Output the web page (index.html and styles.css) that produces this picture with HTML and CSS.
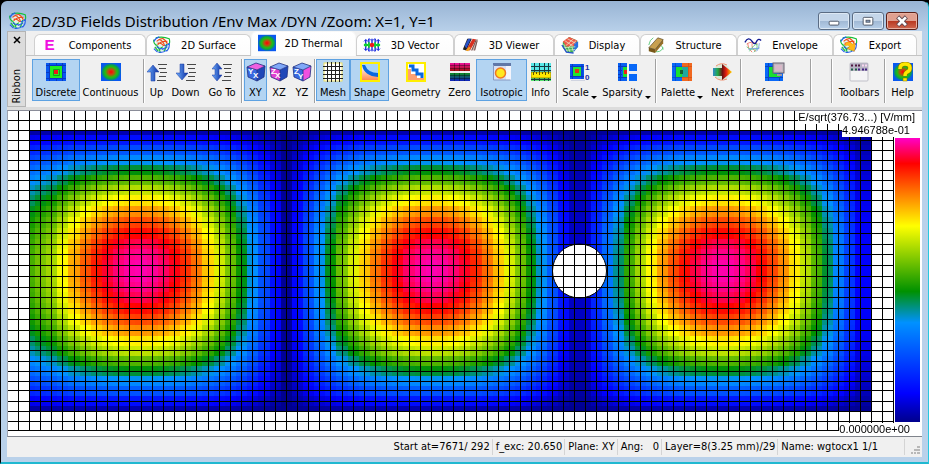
FILE: index.html
```html
<!DOCTYPE html>
<html lang="en">
<head>
    <meta charset="UTF-8">
    <meta name="viewport" content="width=device-width, initial-scale=1.0">
    <title>2D/3D Fields Distribution</title>
    <link rel="stylesheet" href="styles.css">
</head>
<body>
<!-- Icon sprite -->
<svg class="sprite" width="0" height="0">
    <defs>
        <radialGradient id="heat">
            <stop offset="0" stop-color="#f00"/>
            <stop offset="0.25" stop-color="#d04010"/>
            <stop offset="0.6" stop-color="#1ec010"/>
            <stop offset="0.8" stop-color="#0a9c50"/>
            <stop offset="1" stop-color="#0858f0"/>
        </radialGradient>
        <linearGradient id="arrow" x1="0" x2="1">
            <stop offset="0" stop-color="#6fb0ff"/>
            <stop offset="1" stop-color="#0a2ca0"/>
        </linearGradient>
        <linearGradient id="next" x1="0" x2="1">
            <stop offset="0" stop-color="#38c"/>
            <stop offset="0.25" stop-color="#2a4"/>
            <stop offset="0.5" stop-color="#701010"/>
            <stop offset="0.7" stop-color="#e82010"/>
            <stop offset="1" stop-color="#ffe000"/>
        </linearGradient>
        <linearGradient id="redBars" x1="0" y1="0" x2="0" y2="1">
            <stop offset="0" stop-color="#f0109c"/>
            <stop offset="1" stop-color="#a01010"/>
        </linearGradient>
        <linearGradient id="blueBars" x1="0" y1="0" x2="0" y2="1">
            <stop offset="0" stop-color="#109020"/>
            <stop offset="1" stop-color="#1020c0"/>
        </linearGradient>
        <linearGradient id="orange" x1="0" y1="0" x2="0" y2="1">
            <stop offset="0" stop-color="#fff"/>
            <stop offset="1" stop-color="#ff8a50"/>
        </linearGradient>
    </defs>
    <symbol id="i-ball" viewBox="0 0 20 20">
        <circle cx="10" cy="10" r="7" fill="#e4f2ea"/>
        <path d="M4 6q4-4 8-3M5 10q4-5 11-4M7 4q4 1 6 7M11 3q4 2 5 6M5 8q4-1 7 3" fill="none" stroke="#f04a18" stroke-width="1.200"/>
        <path d="M3 2q8-2 15 1 1 3 0 6M1 4q-1 3 2 6M2 9q4 2 6 9M2 12l4 5M15 9q0 5-3 8M11 12q-3 1-4 4" fill="none" stroke="#18c038" stroke-width="1.300"/>
        <path d="M4 12q4 3 9 2M6 18q5 1 9-2M18 8q1 5-3 9M13 11q4-1 5-3M1 14l4 4M10 15l6-3M1 6q2-4 6-5" fill="none" stroke="#2860e8" stroke-width="1.300"/>
    </symbol>
    <symbol id="i-e" viewBox="0 0 20 20">
        <text x="4" y="16" font-family="Liberation Sans" font-weight="bold" font-size="17" fill="#f010e0">E</text>
    </symbol>
    <symbol id="i-thermal" viewBox="0 0 20 20">
        <rect y="1" width="20" height="18" fill="#0858f0"/>
        <rect y="1" width="20" height="18" fill="url(#heat)"/>
    </symbol>
    <symbol id="i-discrete" viewBox="0 0 20 20">
        <rect y="1" width="20" height="18" fill="#0858f0"/>
        <path d="M3.500 1v18M16.500 1v18M0 3.500h20M0 16.500h20M10.500 1v18M0 10.500h20" stroke="#0838c0"/>
        <rect x="4" y="4" width="12" height="12" fill="#20f020"/>
        <path d="M7.500 7.500h6v6h-6z" fill="none" stroke="#12a020"/>
        <rect x="8" y="8" width="4" height="4" fill="#f01818"/>
    </symbol>
    <symbol id="i-vector" viewBox="0 0 20 20">
        <path d="M3 4v12M6.500 3v14M10 3v14M13.500 3v14M17 4v12" stroke="#2030e0" stroke-width="1.600"/>
        <path d="M1 6l2-2 2 2M5 5l2-2 2 2M11 5l2-2 2 2M15 6l2-2 2 2M1 14l2 2 2-2M5 15l2 2 2-2M11 15l2 2 2-2M15 14l2 2 2-2" fill="none" stroke="#2030e0"/>
        <path d="M3 8v4M6.500 7v6M13.500 7v6M17 8v4M1 10h18" stroke="#10d030" stroke-width="2"/>
        <circle cx="10" cy="10" r="2.500" fill="#f01818"/>
    </symbol>
    <symbol id="i-viewer" viewBox="0 0 20 20">
        <path d="M2 15L7 3h5L6 16z" fill="#202020"/>
        <path d="M4 11L8 3h3L6 14z" fill="#2850c8"/>
        <path d="M6 15L13 3l4 1-7 12z" fill="#d83020"/>
        <path d="M5 16l4-4 2 1-3 4z" fill="#f0a020"/>
        <path d="M11 16l5-11 3-2-3 13z" fill="#cbb8b4"/>
        <path d="M12 16l5-12M15 16l3-11" stroke="#6b4540"/>
    </symbol>
    <symbol id="i-display" viewBox="0 0 20 20">
        <path d="M2 7l7-6 9 4 1 7-6 7-7-1-4-5z" fill="#38b050"/>
        <path d="M2 6l7-5 9 4-3 6-9 1z" fill="#f05848"/>
        <path d="M15 8l4-2v6l-6 7z" fill="#2870e0"/>
        <path d="M4 5l9 6M7 3l9 5M5 11l9-8M9 12l8-7M3 9l4 9M8 12l2 6M12 12l2 6M3 13l13-1M5 16l11-1" stroke="#e8f0d0" stroke-width="0.800"/>
        <path d="M1 10l5 8 8 1" fill="none" stroke="#2850d0" stroke-width="1.500"/>
    </symbol>
    <symbol id="i-structure" viewBox="0 0 20 20">
        <path d="M2 10q1-6 5-8M8 17q7 2 10-4M13 9q5 2 5 6" fill="none" stroke="#58c878"/>
        <path d="M2 13L12 2l6 2-9 11z" fill="#c8a050"/>
        <path d="M2 13l7 2v4l-7-2z" fill="#785818"/>
        <path d="M9 15l9-11v4L9 19z" fill="#987028"/>
        <path d="M2 13L12 2l6 2-9 11z" fill="none" stroke="#504020" stroke-width="0.700"/>
    </symbol>
    <symbol id="i-envelope" viewBox="0 0 20 20">
        <path d="M3 9q5-4 12 0M4 8q0 6 5 10M9 8q-1 6 4 9" fill="none" stroke="#f07868"/>
        <path d="M3 12q5 5 14 1M6 17q5-8 9-8M14 9q2 5-3 9" fill="none" stroke="#60c880"/>
        <path d="M5 15q6-2 12-1M17 8q0 6-3 9" fill="none" stroke="#78a0e8"/>
        <path d="M1 7q4-7 8-1 3 5 5 0 2-4 5-1" fill="none" stroke="#101890" stroke-width="1.500"/>
    </symbol>
    <symbol id="i-updown" viewBox="0 0 20 20">
        <path d="M11 2.500h9M12 6.500h7M13 10.500h7M12 14.500h7M10 18.500h9" stroke="#484848"/>
    </symbol>
    <symbol id="i-up" viewBox="0 0 20 20">
        <use href="#i-updown"/>
        <path d="M6 3l6 7H8v9H4v-9H0z" fill="url(#arrow)" stroke="#1838a0" stroke-width="0.500"/>
    </symbol>
    <symbol id="i-down" viewBox="0 0 20 20">
        <use href="#i-updown"/>
        <path d="M6 18l6-7H8V2H4v9H0z" fill="url(#arrow)" stroke="#1838a0" stroke-width="0.500"/>
    </symbol>
    <symbol id="i-goto" viewBox="0 0 20 20">
        <use href="#i-updown"/>
        <path d="M5 1l5 6H7v6h3l-5 6-5-6h3V7H0z" fill="url(#arrow)" stroke="#1838a0" stroke-width="0.500"/>
    </symbol>
    <symbol id="i-xy" viewBox="0 0 20 20">
        <path d="M1 5l10 3v11L2 15z" fill="#3868e0"/>
        <path d="M11 8l8-4-1 11-7 4z" fill="#2048b8"/>
        <path d="M1 5l9-4 9 3-8 4z" fill="#f060e0"/>
        <path d="M1 5l10 3v11L2 15zM11 8l8-4-1 11-7 4M1 5l9-4 9 3" fill="none" stroke="#203080" stroke-width="0.800"/>
        <text x="2" y="12" class="axis">Y</text><text x="7" y="16" class="axis">X</text>
    </symbol>
    <symbol id="i-xz" viewBox="0 0 20 20">
        <path d="M1 5l10 3v11L2 15z" fill="#e040d0"/>
        <path d="M11 8l8-4-1 11-7 4z" fill="#2048b8"/>
        <path d="M1 5l9-4 9 3-8 4z" fill="#80a8f8"/>
        <path d="M1 5l10 3v11L2 15zM11 8l8-4-1 11-7 4M1 5l9-4 9 3" fill="none" stroke="#203080" stroke-width="0.800"/>
        <text x="2" y="12" class="axis">Z</text><text x="6" y="16" class="axis">X</text>
    </symbol>
    <symbol id="i-yz" viewBox="0 0 20 20">
        <path d="M1 5l10 3v11L2 15z" fill="#3868e0"/>
        <path d="M11 8l8-4-1 11-7 4z" fill="#f050e0"/>
        <path d="M1 5l9-4 9 3-8 4z" fill="#80a8f8"/>
        <path d="M1 5l10 3v11L2 15zM11 8l8-4-1 11-7 4M1 5l9-4 9 3" fill="none" stroke="#203080" stroke-width="0.800"/>
        <text x="2" y="12" class="axis">Z</text><text x="6" y="17" class="axis">Y</text>
    </symbol>
    <symbol id="i-mesh" viewBox="0 0 20 20">
        <rect x="1" y="1" width="18" height="18" fill="#fff" stroke="#f0e060"/>
        <path d="M4.500 0v20M8.500 0v20M12.500 0v20M16.500 0v20M0 4.500h20M0 8.500h20M0 12.500h20M0 16.500h20" stroke="#202020"/>
    </symbol>
    <symbol id="i-shape" viewBox="0 0 20 20">
        <rect x="1" y="1" width="18" height="18" fill="#a8d4f4"/>
        <path d="M2 3q4 9 16 10v5H2z" fill="url(#orange)"/>
        <path d="M2 3h3q3 8 13 8v4Q4 14 2 3z" fill="#0868e0"/>
        <rect x="1" y="1" width="18" height="18" fill="none" stroke="#ffee00" stroke-width="2"/>
    </symbol>
    <symbol id="i-geometry" viewBox="0 0 20 20">
        <rect x="1" y="1" width="18" height="18" fill="#fff"/>
        <path d="M2 7h3v5h6v4h7v2H2z" fill="#ffa070"/>
        <path d="M3 4h4v4h4v4h5v4" fill="none" stroke="#0868e0" stroke-width="3"/>
        <rect x="1" y="1" width="18" height="18" fill="none" stroke="#ffee00" stroke-width="2"/>
    </symbol>
    <symbol id="i-zero" viewBox="0 0 20 20">
        <rect y="1" width="20" height="8" fill="url(#redBars)"/>
        <rect y="11" width="20" height="8" fill="url(#blueBars)"/>
        <path d="M0 3.500h20M0 6.500h20M0 13.500h20M0 16.500h20M4.500 1v8M9.500 1v8M14.500 1v8M4.500 11v8M9.500 11v8M14.500 11v8" stroke="#000" stroke-opacity="0.350"/>
    </symbol>
    <symbol id="i-isotropic" viewBox="0 0 20 20">
        <rect x="1" y="1" width="18" height="17" fill="#d8e0f4"/>
        <rect x="1" y="1" width="18" height="3" fill="#6078a8"/>
        <rect x="14" y="4" width="5" height="14" fill="#f4f4fc"/>
        <path d="M1.500 3v15h17" fill="none" stroke="#8898c0"/>
        <circle cx="8.500" cy="11" r="5" fill="#ffe820" stroke="#f07820" stroke-width="1.500"/>
    </symbol>
    <symbol id="i-info" viewBox="0 0 20 20">
        <rect y="1" width="20" height="9" fill="#58e8e8"/>
        <rect y="16" width="20" height="3" fill="#58e070"/>
        <path d="M3.500 1v18M8.500 1v18M13.500 1v18M17.500 1v18M0 4.500h20M0 8.500h20M0 17.500h20" stroke="#183840"/>
        <rect y="10" width="20" height="6" fill="#ffe800" stroke="#605000" stroke-width="0.600"/>
        <path d="M2.500 10v3M5.500 10v2M8.500 10v3M11.500 10v2M14.500 10v3M17.500 10v2" stroke="#605000"/>
    </symbol>
    <symbol id="i-scale" viewBox="0 0 20 20">
        <rect y="2" width="14" height="15" fill="#0858f0"/>
        <path d="M0 4.500h14M0 14.500h14M2.500 2v15M12 2v15" stroke="#0838c0"/>
        <rect x="3" y="5" width="8" height="9" fill="#20e830"/>
        <rect x="5" y="7" width="4" height="4" fill="#d83818"/>
        <path d="M1 18.500h14" stroke="#d0d4e0"/>
        <text x="15" y="8" class="digit">1</text><text x="15" y="18" class="digit">0</text>
    </symbol>
    <symbol id="i-sparsity" viewBox="0 0 20 20">
        <rect x="1" y="1" width="9" height="18" fill="#0860f0"/>
        <path d="M3.500 1v18M1 4.500h9M1 8.500h4M1 12.500h4M1 15.500h9" stroke="#0838c0"/>
        <path d="M6 5h4v10H6z" fill="#18e030"/>
        <rect x="7" y="8" width="3" height="4" fill="#f02018"/>
        <path d="M12 2h8v7h-8zM12 12h8v7h-8z" fill="#0868f8"/>
    </symbol>
    <symbol id="i-palette" viewBox="0 0 20 20">
        <rect y="1" width="10" height="18" fill="#0868f8"/>
        <rect x="10" y="1" width="10" height="18" fill="#f06820"/>
        <path d="M3.500 1v18M0 4.500h10M0 15.500h10" stroke="#0848c0" stroke-width="0.700"/>
        <path d="M16.500 1v18M10 4.500h10M10 15.500h10" stroke="#d05010" stroke-width="0.700"/>
        <rect x="4" y="5" width="6" height="10" fill="#18e030"/>
        <rect x="10" y="5" width="6" height="10" fill="#20a8a0"/>
        <rect x="8" y="8" width="3" height="4" fill="#186030"/>
    </symbol>
    <symbol id="i-next" viewBox="0 0 20 20">
        <circle cx="9" cy="10" r="8" fill="#d8ead8"/>
        <path d="M3 4q5-4 11-1M2 15q5 5 12 2" fill="none" stroke="#f09070"/>
        <path d="M0 6h9V2l10 8-10 8v-4H0z" fill="url(#next)"/>
    </symbol>
    <symbol id="i-preferences" viewBox="0 0 20 20">
        <rect y="1" width="18" height="18" fill="#0868f8"/>
        <path d="M0 4.500h18M0 15.500h18M3.500 1v18M14.500 1v18" stroke="#0848c0"/>
        <path d="M4 5h5v7h6v3H4z" fill="#18e030"/>
        <rect x="8" y="1" width="11" height="10" fill="#c0b8c0" stroke="#686070"/>
        <rect x="10" y="3" width="7" height="6" fill="#d8b8c8"/>
        <path d="M12 13h5" stroke="#a098a0" stroke-width="2"/>
    </symbol>
    <symbol id="i-toolbars" viewBox="0 0 20 20">
        <rect x="1" y="1" width="18" height="18" rx="1" fill="#f4f4f6" stroke="#c0c0c8"/>
        <rect x="1" y="1" width="18" height="8" fill="#b8b4c4"/>
        <path d="M2 3.500h2M6 3.500h2M9 3.500h2" stroke="#501840" stroke-width="2"/>
        <path d="M13 3.500h2M16 3.500h2" stroke="#f8d8f0" stroke-width="2"/>
        <path d="M2 7.500h2M6 7.500h2" stroke="#206048" stroke-width="2"/>
        <path d="M9 7.500h2M13 7.500h2M16 7.500h2" stroke="#402080" stroke-width="2"/>
    </symbol>
    <symbol id="i-help" viewBox="0 0 20 20">
        <use href="#i-thermal"/>
        <path d="M7 7q0-5 5-5t5 4q0 3-3 4-2 1-2 4" fill="none" stroke="#807000" stroke-width="4.500"/>
        <path d="M7 7q0-5 5-5t5 4q0 3-3 4-2 1-2 4" fill="none" stroke="#ffe800" stroke-width="3.500"/>
        <rect x="10" y="16" width="4" height="3" fill="#ffe800" stroke="#807000" stroke-width="0.500"/>
    </symbol>
    <symbol id="i-export" viewBox="0 0 20 20">
        <use href="#i-ball"/>
        <path d="M6 8q4-3 8 1l3-1-1 9-8-3 3-2q-2-3-5-1z" fill="#ffb818" stroke="#f09010" stroke-width="0.500"/>
    </symbol>
</svg>

<div class="window">
    <header class="titlebar">
        <svg class="icon"><use href="#i-ball"/></svg>
        <h1>2D/3D Fields Distribution /Env Max /DYN /Zoom: X=1, Y=1</h1>
        <div class="window-buttons">
            <button aria-label="Minimize"><svg viewBox="0 0 31 17"><rect x="10.500" y="8.500" width="10" height="4" rx="1" fill="#fff" stroke="#505868"/></svg></button>
            <button aria-label="Maximize"><svg viewBox="0 0 31 17"><rect x="10.500" y="4.500" width="10" height="8" rx="1" fill="#fff" stroke="#505868"/><rect x="13.500" y="7.500" width="4" height="2" fill="#8fa8c8" stroke="#505868"/></svg></button>
            <button class="close" aria-label="Close"><svg viewBox="0 0 31 17"><path d="M11 4l9 9M20 4l-9 9" stroke="#604850" stroke-width="4.500"/><path d="M11.500 4.500l8 8M19.500 4.500l-8 8" stroke="#fff" stroke-width="2.800"/></svg></button>
        </div>
    </header>

    <div class="client">
        <div class="ribbon">
            <div class="ribbon-handle">
                <button aria-label="Close ribbon"><svg viewBox="0 0 8 8"><path d="M1 1l6 6M7 1l-6 6" stroke="#000" stroke-width="1.500"/></svg></button>
                <span>Ribbon</span>
            </div>
            <div class="ribbon-body">
                <nav class="tabs">
                    <button class="tab"><svg class="icon"><use href="#i-e"/></svg><span>Components</span></button>
                    <button class="tab"><svg class="icon"><use href="#i-ball"/></svg><span>2D Surface</span></button>
                    <button class="tab active"><svg class="icon"><use href="#i-thermal"/></svg><span>2D Thermal</span></button>
                    <button class="tab"><svg class="icon"><use href="#i-vector"/></svg><span>3D Vector</span></button>
                    <button class="tab"><svg class="icon"><use href="#i-viewer"/></svg><span>3D Viewer</span></button>
                    <button class="tab"><svg class="icon"><use href="#i-display"/></svg><span>Display</span></button>
                    <button class="tab"><svg class="icon"><use href="#i-structure"/></svg><span>Structure</span></button>
                    <button class="tab"><svg class="icon"><use href="#i-envelope"/></svg><span>Envelope</span></button>
                    <button class="tab"><svg class="icon"><use href="#i-export"/></svg><span>Export</span></button>
                </nav>
                <div class="toolbar">
                    <button class="tool on"><svg class="icon"><use href="#i-discrete"/></svg><span>Discrete</span></button>
                    <button class="tool"><svg class="icon"><use href="#i-thermal"/></svg><span>Continuous</span></button>
                    <i class="sep"></i>
                    <button class="tool"><svg class="icon"><use href="#i-up"/></svg><span>Up</span></button>
                    <button class="tool"><svg class="icon"><use href="#i-down"/></svg><span>Down</span></button>
                    <button class="tool"><svg class="icon"><use href="#i-goto"/></svg><span>Go To</span></button>
                    <i class="sep"></i>
                    <button class="tool on"><svg class="icon"><use href="#i-xy"/></svg><span>XY</span></button>
                    <button class="tool"><svg class="icon"><use href="#i-xz"/></svg><span>XZ</span></button>
                    <button class="tool"><svg class="icon"><use href="#i-yz"/></svg><span>YZ</span></button>
                    <i class="sep"></i>
                    <button class="tool on"><svg class="icon"><use href="#i-mesh"/></svg><span>Mesh</span></button>
                    <button class="tool on"><svg class="icon"><use href="#i-shape"/></svg><span>Shape</span></button>
                    <button class="tool"><svg class="icon"><use href="#i-geometry"/></svg><span>Geometry</span></button>
                    <button class="tool"><svg class="icon"><use href="#i-zero"/></svg><span>Zero</span></button>
                    <button class="tool on"><svg class="icon"><use href="#i-isotropic"/></svg><span>Isotropic</span></button>
                    <button class="tool"><svg class="icon"><use href="#i-info"/></svg><span>Info</span></button>
                    <i class="sep"></i>
                    <button class="tool"><svg class="icon"><use href="#i-scale"/></svg><span class="drop">Scale</span></button>
                    <button class="tool"><svg class="icon"><use href="#i-sparsity"/></svg><span class="drop">Sparsity</span></button>
                    <i class="sep"></i>
                    <button class="tool"><svg class="icon"><use href="#i-palette"/></svg><span class="drop">Palette</span></button>
                    <button class="tool"><svg class="icon"><use href="#i-next"/></svg><span>Next</span></button>
                    <i class="sep"></i>
                    <button class="tool"><svg class="icon"><use href="#i-preferences"/></svg><span>Preferences</span></button>
                    <i class="sep"></i>
                    <i class="gap"></i>
                    <i class="sep"></i>
                    <button class="tool"><svg class="icon"><use href="#i-toolbars"/></svg><span>Toolbars</span></button>
                    <i class="sep"></i>
                    <button class="tool"><svg class="icon"><use href="#i-help"/></svg><span>Help</span></button>
                </div>
            </div>
        </div>

        <main class="plot">
            <canvas id="field" width="914" height="325"></canvas>
            <div class="legend">
                <span class="unit">E/sqrt(376.73...) [V/mm]</span>
                <span class="limit">4.946788e-01</span>
                <div class="scale"></div>
                <span class="limit">0.000000e+00</span>
            </div>
        </main>

        <footer class="status">
            <span>Start at=7671/ 292</span>
            <span>f_exc: 20.650</span>
            <span>Plane: XY</span>
            <span>Ang: &nbsp; 0</span>
            <span>Layer=8(3.25 mm)/29</span>
            <span class="name">Name: wgtocx1 1/1</span>
            <svg class="grip" viewBox="0 0 9 9"><path d="M6 0h3v2H6zM3 3h3v2H3zM6 3h3v2H6zM0 6h2v2H0zM3 6h2v2H3zM6 6h3v2H6z" fill="#b8b8b8"/></svg>
        </footer>
    </div>
</div>
<script src="field.js"></script>
</body>
</html>
```
FILE: styles.css
```css
* {
    box-sizing: border-box;
}

body {
    margin: 0;
    background: #000;
    font-family: "DejaVu Sans Condensed", "DejaVu Sans", sans-serif;
    font-size: 11px;
    color: #000;
}

button {
    margin: 0;
    padding: 0;
    border: 0;
    background: none;
    font: inherit;
    color: inherit;
}

h1 {
    margin: 0;
    font-family: "Noto Sans", sans-serif;
    font-size: 15px;
    font-weight: normal;
    line-height: 20px;
    white-space: nowrap;
}

.sprite {
    position: absolute;
}

.icon {
    width: 20px;
    height: 20px;
    flex: none;
    display: block;
}

.axis {
    font: bold 8px "Liberation Sans", sans-serif;
    fill: #fff;
}

.digit {
    font: bold 8px "Liberation Sans", sans-serif;
    fill: #1828a0;
}

/* Window frame */
.window {
    min-height: 100vh;
    display: flex;
    flex-direction: column;
    padding: 0 6px 5px;
    border: 1px solid #000;
    border-right-color: #28c8e0;
    border-bottom: 2px solid #20b8d0;
    border-radius: 7px 7px 0 0;
    background: linear-gradient(#98b4d4, #b9d1ea 31px, #b9d1ea);
}

.titlebar {
    height: 30px;
    display: flex;
    align-items: center;
    gap: 5px;
    padding: 9px 4px 0 2px;
}

.titlebar .icon {
    width: 18px;
    height: 18px;
}

.window-buttons {
    display: flex;
    gap: 2px;
    margin-left: auto;
}

.window-buttons button {
    width: 32px;
    height: 18px;
    border: 1px solid #5a6c84;
    border-radius: 3px;
    background: linear-gradient(#c4d6ea 50%, #a0b8d4 50%, #b8d0ea);
    box-shadow: inset 0 0 0 1px #dce8f4;
}

.window-buttons svg {
    display: block;
    width: 100%;
}

.window-buttons .close {
    border-color: #5c2018;
    background: linear-gradient(#e0a090 50%, #b83820 50%, #d06850);
    box-shadow: inset 0 0 0 1px #e8b0a0;
}

.client {
    flex: 1;
    display: flex;
    flex-direction: column;
    background: #f0f0f0;
}

/* Ribbon */
.ribbon {
    display: flex;
    height: 79px;
    border-bottom: 3px solid #dcdcdc;
}

.ribbon-handle {
    width: 19px;
    display: flex;
    flex-direction: column;
    align-items: center;
    justify-content: space-between;
    padding: 4px 0 2px;
    border: 1px solid #b4b4b4;
    background: #dcdcdc;
}

.ribbon-handle svg {
    display: block;
    width: 8px;
    height: 8px;
}

.ribbon-handle span {
    writing-mode: vertical-rl;
    transform: rotate(180deg);
    line-height: 14px;
}

.ribbon-body {
    flex: 1;
    min-width: 0;
}

.tabs {
    display: grid;
    grid-template-columns: 112fr 105fr 105fr 98fr 100fr 86fr 97fr 96fr 84fr;
    align-items: end;
    height: 25px;
    padding: 0 5px 0 8px;
    border-bottom: 1px solid #c4c4c4;
}

.tab {
    display: flex;
    align-items: center;
    height: 21px;
    padding: 0 4px 0 6px;
    border: 1px solid #d0d0d0;
    border-bottom: 0;
    border-radius: 6px 6px 0 0;
    background: linear-gradient(#fff, #fcfcfc);
    white-space: nowrap;
}

.tab .icon {
    width: 18px;
    height: 18px;
}

.tab span {
    flex: 1;
    text-align: center;
}

.tab.active {
    height: 25px;
    margin-bottom: -1px;
    border-color: #f8f8f8;
    padding-bottom: 2px;
}

.toolbar {
    display: grid;
    grid-template-columns:
        48fr 61fr 5fr 21fr 37fr 36fr 4fr 23fr 24fr 22fr 3fr
        34fr 39fr 54fr 33fr 51fr 27fr 6fr 39fr 55fr 4fr 48fr 33fr 4fr
        64fr 8fr 13fr 8fr 46fr 6fr 29fr;
    height: 46px;
    padding: 3px 5px 0 6px;
}

.tool {
    min-width: 0;
    height: 42px;
    display: flex;
    flex-direction: column;
    align-items: center;
    gap: 3px;
    padding-top: 2px;
    border: 1px solid transparent;
    white-space: nowrap;
    line-height: 16px;
}

.tool.on {
    border-color: #5ea2e2;
    background: #b3d4f2;
}

.drop::after {
    content: "";
    display: inline-block;
    margin-left: 2px;
    border: 3px solid transparent;
    border-top-color: #000;
    border-bottom: 0;
    vertical-align: -3px;
}

.sep {
    justify-self: center;
    width: 2px;
    height: 44px;
    border-left: 1px solid #a0a0a0;
    border-right: 1px solid #fff;
}

/* Field plot */
.plot {
    position: relative;
    border-top: 1px solid #8a8c98;
    border-left: 1px solid #a0a4b0;
    border-bottom: 1px solid #80848c;
    background: #fff;
}

.plot canvas {
    display: block;
    width: 100%;
}

.legend {
    position: absolute;
    top: 0;
    right: 0;
    bottom: 0;
    display: flex;
    flex-direction: column;
    align-items: flex-end;
    font-family: "Liberation Sans", Arial, sans-serif;
    line-height: 13px;
}

.legend span {
    background: #fff;
}

.unit {
    padding-right: 7px;
}

.limit {
    padding-right: 12px;
}

.scale {
    flex: 1;
    width: 25px;
    margin: 1px 2px 1px 0;
    background: linear-gradient(#ff00c8, #f00 9%, #ff0 31%, #009100 54%, #0091ff 65%, #00f 90%, #00008c);
}

/* Status bar */
.status {
    flex: 1;
    display: flex;
    align-items: center;
    justify-content: flex-end;
    line-height: 16px;
    white-space: nowrap;
}

.status span {
    padding: 0 2px 0 3px;
    border-right: 1px solid #d4d4d4;
}

.status .name {
    padding-right: 26px;
}

.grip {
    width: 9px;
    height: 9px;
    margin: 6px 2px 0 6px;
}
```
FILE: field.js
```js
const canvas = document.getElementById('field');
const ctx = canvas.getContext('2d');

// Mesh lines. Steps are 11px, with a few wider or narrower ones.
const wide = [62, 129, 196, 252, 330, 397, 464];
const xs = [18];
while (xs[xs.length - 1] < 893) {
    const last = xs[xs.length - 1];
    xs.push(last + (wide.includes(last) ? 12 : last === 531 ? 10 : 11));
}
const ys = [120, 130, 140, 150, 160, 170, 180, 190, 200, 211, 222, 233, 244, 254, 265, 276,
    287, 297, 308, 319, 330, 341, 350, 361, 371, 381, 390, 401, 411, 421, 430];

// Centre of each mode and its half width to the left and right
const peaks = [
    {x: 139, left: 150, right: 147},
    {x: 432, left: 146, right: 143},
    {x: 723, left: 143, right: 145}
];

// Colour scale, low to high
const stops = [
    [0, 0, 0, 140], [0.1, 0, 0, 255], [0.345, 0, 145, 255], [0.455, 0, 145, 0],
    [0.685, 255, 255, 0], [0.91, 255, 0, 0], [1, 255, 0, 200]
];

function color(v) {
    for (let i = 1; i < stops.length; i++) {
        const a = stops[i - 1], b = stops[i];
        if (v <= b[0]) {
            const t = (v - a[0]) / (b[0] - a[0]);
            return `rgb(${[1, 2, 3].map(k => Math.round(a[k] + (b[k] - a[k]) * t)).join()})`;
        }
    }
    return 'rgb(255,0,200)';
}

function fieldAt(x, y) {
    const p = x < 286 ? peaks[0] : x < 578 ? peaks[1] : peaks[2];
    const d = Math.abs(x - p.x) / (x < p.x ? p.left : p.right);
    let fx = Math.max(Math.cos(Math.min(d, 1) * Math.PI / 2), 0);
    if (x < 52) fx += (52 - x) * 0.005;
    if (x > 850) fx = Math.max(fx, 0.1);
    if (x > 560 && x < 598) fx = Math.max(fx, 0.05);
    const fy = Math.sin(Math.PI * Math.min(Math.max((y - 128) / 285, 0), 1));
    // Slightly squared corners
    return Math.min(fx * fy * (1 + 0.8 * (1 - fx) * (1 - fy)) * 0.99, 1);
}

// Every mesh cell is split in two; samples lean to the nearest mesh line
function halves(lines) {
    const out = [];
    for (let i = 0; i < lines.length - 1; i++) {
        const a = lines[i], b = lines[i + 1], mid = Math.round((a + b) / 2);
        out.push([a, mid, a + 1], [mid, b, b - 1]);
    }
    return out;
}

function draw() {
    ctx.fillStyle = '#fff';
    ctx.fillRect(0, 0, canvas.width, canvas.height);
    ctx.translate(-8, -111);

    const cols = halves(xs.filter(x => x >= 29 && x <= 871));
    const rows = halves(ys.filter(y => y >= 130 && y <= 411));
    for (const [x1, x2, sx] of cols) {
        for (const [y1, y2, sy] of rows) {
            ctx.fillStyle = color(fieldAt(sx, sy));
            ctx.fillRect(x1, y1, x2 - x1, y2 - y1);
        }
    }

    // Round post
    ctx.beginPath();
    ctx.arc(579.5, 271, 27, 0, Math.PI * 2);
    ctx.fillStyle = '#fff';
    ctx.fill();
    ctx.strokeStyle = '#000';
    ctx.stroke();

    ctx.fillStyle = '#000';
    for (const x of xs) ctx.fillRect(x, 111, 1, 320);
    for (const y of ys) ctx.fillRect(8, y, 886, 1);
}

draw();
```
